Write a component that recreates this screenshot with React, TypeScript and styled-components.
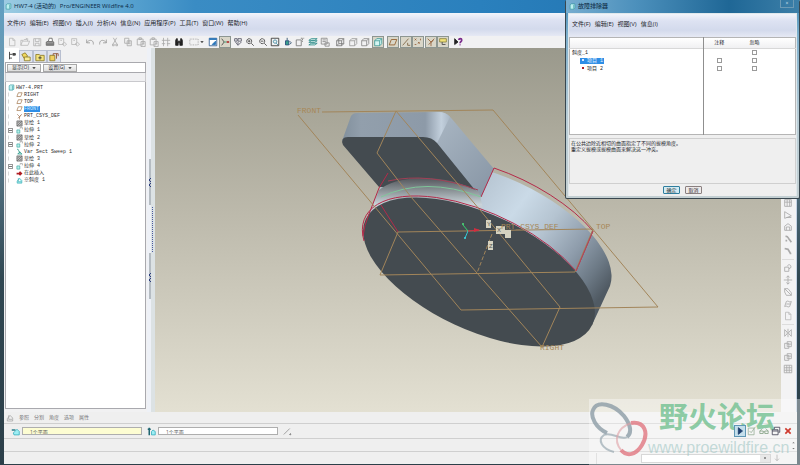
import React from 'react';
import styled, { createGlobalStyle, css } from 'styled-components';

const Global = createGlobalStyle`
  * { box-sizing: border-box; }
  html, body { margin: 0; height: 100%; }
  body {
    font-family: "Open Sans", "Noto Sans CJK SC", sans-serif;
    font-size: 5px;
    line-height: 7px;
    color: #26282e;
    background: #2a3a44;
  }
  button, input, select { font: inherit; color: inherit; margin: 0; padding: 0; border: 0; background: none; }
  button { display: flex; align-items: center; justify-content: center; }
  ul { list-style: none; margin: 0; padding: 0; }
`;

const Desktop = styled.div`
  position: relative;
  min-height: 100vh;
  display: flex;
  flex-direction: column;
  overflow: hidden;
`;

const Frame = styled.div`
  flex: 1;
  display: flex;
  flex-direction: column;
  border: solid #37515f;
  border-width: 0 3px 2px 4px;
  border-image: linear-gradient(#5f9fc4, #6f94a8 20%, #304752 60%, #2c3f49) 1;
  background: #efefef;
`;

const TitleBar = styled.header`
  height: 13px;
  display: flex;
  align-items: center;
  gap: 2px;
  padding-left: 1px;
  color: #0c2a44;
  background: linear-gradient(90deg, #9ccbe2, #64abd4 12%, #3a8cc4 24%, #2a80bd 60%, #1d6ca8);
`;

const TitleText = styled.h1`
  margin: 0;
  font-size: 6px;
  font-weight: 400;
`;

const TitleApp = styled.span`
  margin-left: 4px;
`;

const MenuBar = styled.nav`
  height: 23px;
  display: flex;
  align-items: center;
  gap: 4px;
  padding: 0 3px 2px;
  font-size: 6px;
  white-space: nowrap;
  background: linear-gradient(#f2f5fb, #dde2f2 30%, #d3daec 70%, #e6e9f4);
`;

const MenuItem = styled.button`
  color: #1a1d28;
`;

const ToolBar = styled.div`
  height: 12px;
  display: flex;
  gap: 3px;
  padding-left: 2px;
  background: #f1f1f2;
`;

const ToolGroup = styled.div<{ $w: number }>`
  width: ${(p) => p.$w}px;
  display: flex;
  align-items: center;
  justify-content: space-between;
`;

const ToolButton = styled.button<{ $on?: boolean }>`
  width: 12px;
  height: 12px;
  ${(p) => p.$on && css`
    border: 1px solid #8d9691;
    background: #d9d6c8;
  `}
`;

const PlayButton = styled(ToolButton)`
  border: 1px solid #5f97b5;
  background: #c5dfec;
`;

const Svg = styled.svg<{ $s: number }>`
  display: block;
  flex: none;
  width: ${(p) => p.$s}px;
  height: ${(p) => p.$s}px;
  fill: none;
  stroke: currentColor;
`;

const Work = styled.main`
  flex: 1;
  display: flex;
  min-height: 0;
`;

const Side = styled.aside`
  width: 143px;
  display: flex;
  flex-direction: column;
  padding: 0 1px 3px;
  background: #f1f1f2;
`;

const TabRow = styled.div`
  height: 14px;
  display: flex;
  align-items: flex-end;
`;

const Tab = styled.button<{ $on?: boolean }>`
  width: 14px;
  height: ${(p) => (p.$on ? 14 : 12)}px;
  border: 1px solid ${(p) => (p.$on ? '#ffffff' : '#b8bfd0')};
  border-bottom: 0;
  background: ${(p) => (p.$on ? '#ffffff' : '#dfe3ee')};
`;

const FilterRow = styled.div`
  height: 11px;
  display: flex;
  align-items: center;
  gap: 2px;
  padding-left: 1px;
  background: #fff;
  border: 1px solid #a9a9ae;
`;

const FilterButton = styled.button`
  width: 34px;
  height: 8px;
  gap: 3px;
  border: 1px solid #a8a8a8;
  background: linear-gradient(#f7f7f7, #dcdcdc);
`;

const TreeHead = styled.div`
  height: 9px;
  border: 1px solid #c9c9cd;
  border-top: 0;
  background: #f0f0f2;
`;

const TreeBox = styled.div`
  flex: 1;
  border: 1px solid #a9a9ae;
  border-top: 0;
  background: #fff;
  padding: 2px;
  font-family: "Liberation Mono", "Noto Sans CJK SC", monospace;
`;

const Tree = styled.ul`
  height: 100px;
  display: grid;
  grid-auto-rows: minmax(0, 1fr);
`;

const TreeRow = styled.li`
  display: flex;
  align-items: center;
  gap: 1px;
  white-space: pre;
  line-height: 6px;
`;

const Expander = styled.span<{ $box: boolean }>`
  width: 5px;
  height: 5px;
  border: 1px solid ${(p) => (p.$box ? '#9a9a9a' : 'transparent')};
  border-left-color: ${(p) => (p.$box ? '#9a9a9a' : '#d8d8d8')};
  background: ${(p) => (p.$box ? 'linear-gradient(#777,#777) center / 3px 1px no-repeat' : 'none')};
  margin-right: 2px;
`;

const TreeName = styled.span<{ $sel?: boolean }>`
  padding-right: 1px;
  color: ${(p) => (p.$sel ? '#d4eaff' : '#303030')};
  background: ${(p) => (p.$sel ? '#2e8ee6' : 'none')};
`;

const Splitter = styled.div`
  width: 8px;
  display: flex;
  justify-content: center;
  padding: 110px 0 0;
  background: linear-gradient(90deg, #eef1f7 50%, #dce2e4 50%);
`;

const Stage = styled.section`
  flex: 1;
  min-width: 0;
  min-height: 0;
  overflow: hidden;
  background: linear-gradient(#9a998c, #a8a698 18%, #bcb9ab 45%, #cfccbe 72%, #e3e0d2);
`;

const Drawing = styled.svg`
  display: block;
  width: 100%;
  height: 364px;
`;

const RightBar = styled.div`
  width: 16px;
  display: flex;
  flex-direction: column;
  align-items: center;
  padding: 149px 2px 0 0;
  color: #aaa;
  background: #f3f3f4;
  border-right: 1px solid #c4d3e6;
`;

const RightSep = styled.hr`
  width: 12px;
  margin: 2px 0;
  border: 0;
  border-top: 1px solid #ddd;
`;

const PanelTabs = styled.div`
  height: 12px;
  display: flex;
  align-items: center;
  gap: 5px;
  padding-left: 2px;
  color: #77777a;
  border-bottom: 1px solid #cfcfcf;
`;

const Dashboard = styled.div`
  height: 15px;
  display: flex;
  align-items: center;
  gap: 2px;
  padding: 0 3px 0 7px;
  border-bottom: 1px solid #cfcfcf;
`;

const Collector = styled.input<{ $active?: boolean }>`
  width: 120px;
  height: 8px;
  margin-right: 3px;
  padding-left: 7px;
  border: 1px solid #aeaeae;
  color: #5c5c5c;
  background: ${(p) => (p.$active ? '#fdfdd2' : '#ffffff')};
`;

const DashActions = styled.div`
  position: relative;
  z-index: 1;
  margin-left: auto;
  display: flex;
  align-items: center;
`;

const Message = styled.div`
  height: 13px;
  display: flex;
  flex-direction: column;
  justify-content: center;
  align-items: flex-end;
  gap: 3px;
  padding-right: 2px;
  border-bottom: 1px solid #cfcfcf;
`;

const Status = styled.footer`
  height: 12px;
  display: flex;
  align-items: center;
  justify-content: flex-end;
  gap: 2px;
  padding-right: 16px;
  background: #efefef;
`;

const StatusCell = styled.div`
  width: 43px;
  height: 11px;
  border-left: 1px solid #cfcfcf;
`;

const StatusSelect = styled.select`
  width: 130px;
  height: 9px;
  border: 1px solid #c0c0c0;
  appearance: none;
  background: linear-gradient(#555, #555) right 4px center / 2px 2px no-repeat,
    linear-gradient(#dadada, #dadada) right / 10px 100% no-repeat, #fff;
`;

const Dialog = styled.section`
  position: absolute;
  top: 0;
  right: 0;
  width: 235px;
  display: flex;
  flex-direction: column;
  padding: 0 2px 2px;
  border: 1px solid #39474f;
  border-top: 0;
  border-radius: 2px;
  background: linear-gradient(#3f89b6, #7fb0cd 18%, #b9cdd6 60%, #c3cfd2);
`;

const DialogTitle = styled.header`
  height: 13px;
  display: flex;
  align-items: center;
  gap: 2px;
  margin: 0 -2px;
  padding: 0 5px 0 3px;
  color: #08263c;
  background: linear-gradient(90deg, #76add0, #4c90bc 30%, #1f6796 70%, #3c7fa8);
`;

const CloseButton = styled.button`
  width: 14px;
  height: 8px;
  margin-left: auto;
  align-self: flex-start;
  color: #d7e6ef;
  border: 1px solid #6c9ab5;
  border-top: 0;
`;

const DialogBody = styled.div`
  background: #efefef;
  border: 1px solid #dfe8ec;
  border-bottom: 0;
`;

const Items = styled.table`
  width: 100%;
  height: 98px;
  table-layout: fixed;
  border-collapse: collapse;
  border: 1px solid #b5b5b5;
  background: #fff;
  font-family: "Liberation Mono", "Noto Sans CJK SC", monospace;
`;

const ItemCol = styled.col<{ $w?: number }>`
  width: ${(p) => (p.$w ? `${p.$w}px` : 'auto')};
`;

const HeadRow = styled.tr`
  height: 11px;
  background: linear-gradient(#fff, #f0f0f2);
  border-bottom: 1px solid #d8d8d8;
`;

const ItemRow = styled.tr<{ $fill?: boolean }>`
  height: ${(p) => (p.$fill ? 'auto' : '8px')};
`;

const Cell = styled.td<{ $first?: boolean }>`
  padding: 0;
  font-weight: 400;
  text-align: ${(p) => (p.$first ? 'left' : 'center')};
  border-right: ${(p) => (p.$first ? '1px solid #8f8f8f' : '0')};
  line-height: 6px;
  vertical-align: middle;
`;

const ItemName = styled.span<{ $sel?: boolean; $child?: boolean }>`
  margin-left: ${(p) => (p.$child ? 10 : 1)}px;
  padding: 0 1px;
  color: ${(p) => (p.$sel ? '#e8f4ff' : '#222')};
  background: ${(p) => (p.$sel ? '#2e8ee6' : 'none')};
`;

const Bullet = styled.span<{ $sel?: boolean }>`
  display: inline-block;
  width: 2px;
  height: 2px;
  margin: 0 3px 1px 1px;
  background: ${(p) => (p.$sel ? '#d9e9ff' : '#b02028')};
`;

const Check = styled.input`
  appearance: none;
  display: block;
  width: 5px;
  height: 5px;
  margin: 0 auto;
  border: 1px solid #9a9a9a;
  background: #fff;
`;

const Explain = styled.p`
  height: 46px;
  margin: 3px 0 2px;
  padding: 1px;
  line-height: 6px;
  border: 1px solid #cfcfcf;
`;

const DialogButtons = styled.div`
  display: flex;
  justify-content: center;
  gap: 5px;
  padding-bottom: 2px;
`;

const DialogButton = styled.button<{ $main?: boolean }>`
  width: 17px;
  height: 8px;
  border: 1px solid ${(p) => (p.$main ? '#2f7e9e' : '#8a8080')};
  border-radius: 1px;
  background: ${(p) => (p.$main ? '#d3ebf3' : '#eeeaea')};
`;

const Watermark = styled.div`
  position: absolute;
  right: 0;
  bottom: 0;
  width: 211px;
  height: 67px;
  display: flex;
  pointer-events: none;
  background: rgba(255, 255, 255, 0.38);
`;

const WaterText = styled.div`
  flex: 1;
  display: flex;
  flex-direction: column;
  font-family: "Liberation Sans", "Noto Sans CJK SC", sans-serif;
  white-space: nowrap;
`;

const WaterName = styled.span`
  margin-left: 11px;
  font-size: 29px;
  line-height: 39px;
  font-weight: 700;
  color: rgba(112, 192, 143, 0.8);
`;

const WaterUrl = styled.span`
  font-size: 16px;
  line-height: 20px;
  color: rgba(160, 198, 196, 0.6);
`;

const WaterLogo = styled.svg`
  width: 59px;
  height: 67px;
  fill: none;
`;

type IconName =
  | 'new' | 'open' | 'save' | 'print' | 'mail' | 'undo' | 'redo' | 'cut' | 'copy' | 'paste' | 'regen'
  | 'find' | 'select' | 'sketch' | 'spin' | 'orient' | 'zoomIn' | 'zoomOut' | 'fit' | 'refit' | 'view'
  | 'layers' | 'list' | 'wire' | 'hidden' | 'nohide' | 'shaded' | 'plane' | 'axis' | 'point' | 'csys'
  | 'note' | 'help' | 'tree' | 'folder' | 'fav' | 'connect' | 'part' | 'hatch' | 'extrude' | 'sweep'
  | 'insert' | 'draft' | 'hole' | 'shell' | 'rib' | 'round' | 'chamfer' | 'revolve' | 'move' | 'blend'
  | 'style' | 'mirror' | 'merge' | 'pattern' | 'play' | 'check' | 'glasses' | 'window' | 'close'
  | 'hinge' | 'pull' | 'flip' | 'arrow' | 'caret' | 'caretUp' | 'slope';

const cube = <path d="M2 4.5h6v6H2zM2 4.5L4.500 2H10.500V8L8 10.500M8 4.500L10.500 2" />;

const shapes: Record<IconName, React.ReactNode> = {
  new: <path stroke="#bbb" d="M3 1.500h4L9.500 4v6.500h-6.500zM7 1.500V4h2.500" />,
  open: <path stroke="#bbb" d="M1 10V4h3l1-1h4v2M1 10l2-5h8.500L9.500 10zM7 1.500l3 1" />,
  save: <path stroke="#b4b4b4" d="M2 2h8.500v8.500H2zM4 2v3.500h4.500V2M4 10.500V7.500h4.500v3" />,
  print: <g stroke="#666"><path fill="#999" d="M1.500 6L4 5h5l1.500 1v4h-9z" /><path fill="#fff" d="M4 5.500l1-4h3.500l.5 4zM2 8.500h8" /></g>,
  mail: <path stroke="#b8b8b8" d="M2 2h6v7H2zM4 4h2M6 8.500l3-2 2.500 2-2.500 2.500z" />,
  undo: <path stroke="#999" d="M2 3v4h4M2 7c2-4 8-4 8 .5V9" />,
  redo: <path stroke="#999" d="M10 3v4H6M10 7C8 3 2 3 2 7.500V9" />,
  cut: <path stroke="#aaa" d="M4 1l4 7M8 1L4 8M3 8.500h2v2H3zM7 8.500h2v2H7z" />,
  copy: <path stroke="#aaa" d="M2 1.500h5v6H2zM5 4.500h5v6H5zM6 6h3M6 8h3" />,
  paste: <path stroke="#aaa" d="M1.500 2.500h7v7h-7zM3.500 1h3v2h-3zM6 5.500h5v6H6zM7 7.500h3" />,
  regen: <path stroke="#aaa" d="M3 1v10M8 1v10M1 4h10M1 8h4M7 8h4" />,
  find: <path fill="#222" stroke="#222" d="M2 4l1-2h1v3h4V2h1l1 2v6H7V7H5v3H2z" />,
  select: <path stroke="#999" strokeDasharray="1 1" d="M1 2.500h10v7H1z" />,
  sketch: <g><path fill="#fff" stroke="#2c5a92" d="M1.500 1.500h9v9h-9z" /><path fill="#2674b8" stroke="#2674b8" d="M2 2h8v1H2zM5 9l4-4v4z" /></g>,
  spin: <g><path stroke="#444" d="M2 2l3 4-3 4" /><path stroke="#2a9c6a" d="M5 6h3" /><path stroke="#b03030" strokeWidth="2" d="M8 6h3" /></g>,
  orient: <path stroke="#556" d="M2 2h3v3H2zM6 2h4v3H6zM3 6l3 4 4-4M6 6v3" />,
  zoomIn: <path stroke="#444" d="M5 2a3 3 0 1 0 .1 0M3.500 5h3M5 3.500v3M7.500 7.500l3 3" />,
  zoomOut: <path stroke="#444" d="M5 2a3 3 0 1 0 .1 0M3.500 5h3M7.500 7.500l3 3" />,
  fit: <g><path stroke="#333" d="M1.500 1.500h9v9h-9z" /><path stroke="#2b8098" d="M6 3.500a2 2 0 1 0 .1 0M7.500 7.500l2 2" /></g>,
  refit: <g><path fill="#39a08c" stroke="#247" d="M3 4.500h4v5H3z" /><path stroke="#246" d="M5 1v3M8 5l2 2-2 2" /></g>,
  view: <g stroke="#777"><path d="M1.500 3.500h6v7h-6z" /><path strokeDasharray="2 1" d="M7 1.500h4M9 2v4" /></g>,
  layers: <g stroke="#2d8a88"><path fill="#dff3ef" d="M1 9.500l3-2h7l-3 2zM1 6.500l3-2h7l-3 2zM1 4l3-2h7L8 4z" /></g>,
  list: <path stroke="#888" d="M1.500 1.500h7v7h-7zM3 3.500h4M3 5.500h4M6 7h5v4H6z" />,
  wire: <g stroke="#777">{cube}<path d="M4.500 2v6M2 10.500L4.500 8H10.500" /></g>,
  hidden: <g stroke="#999">{cube}</g>,
  nohide: <g stroke="#888">{cube}</g>,
  shaded: <g stroke="#3f9a97" fill="#d5f5f2">{cube}</g>,
  plane: <path stroke="#8f5a28" d="M1.500 9.500L4 3h6.500L8 9.500z" />,
  axis: <path stroke="#7b6240" d="M2 10L9 2M8 7v3h3" />,
  point: <path stroke="#94603a" d="M2 2l2 2M4 2L2 4M6 6l2 2M8 6L6 8M9 2v2M2 9h2" />,
  csys: <path stroke="#94603a" d="M2 2l4 4 4-4M6 6v5M3 9l6-5" />,
  note: <g><path fill="#f2e27a" stroke="#8c8440" d="M2 2h8v4H2z" /><path stroke="#444" d="M5 6v3h4" /></g>,
  help: <g><path fill="#222" stroke="#222" d="M2 2v7l4-3z" /><path stroke="#7a2c8c" strokeWidth="2" d="M7 3.500c0-2 3.500-2 3.500 0 0 2-2 2-2 4M8.500 9v1" /></g>,
  tree: <g><path stroke="#333" d="M3 1v9M3 4h3M3 8.500h3" /><path fill="#555" stroke="#333" d="M7 3h3v2H7z" /></g>,
  folder: <g><path fill="#f0d860" stroke="#8d7b28" d="M1 3l4-2 3 4-4 3z" /><path fill="#f7eb9b" stroke="#8d7b28" d="M4 6h7v4.500H4z" /></g>,
  fav: <g><path fill="#f3e27b" stroke="#8d7b28" d="M1 3h4l1 1h5v6.500H1z" /><path stroke="#333" d="M4 7h4M6 5v4" /></g>,
  connect: <g><path fill="#f0d060" stroke="#8d7b28" d="M1 4h6v6.500H1z" /><path stroke="#8a4a2a" d="M5 4V2h6v3M9 2v6" /></g>,
  part: <path fill="#bdf0f0" stroke="#2a9098" d="M2 3l2-1.500h6v7.500L8 10.500H2zM8 3v7" />,
  hatch: <g stroke="#555"><path fill="#bbb" d="M1.500 1.500h9v9h-9z" /><path d="M2 6l4-4M2 10l8-8M6 10l4-4" /></g>,
  extrude: <g><path stroke="#888" d="M7 3V1h4v3" /><path fill="#b6f0e9" stroke="#2a9c9a" d="M1.500 5h5v5.500h-5z" /></g>,
  sweep: <path stroke="#2a9c8a" strokeWidth="1.500" d="M2 2c4 0 1 5 5 5M3 10l4-3 3 3.500z" />,
  insert: <path stroke="#b01c22" strokeWidth="3" d="M1 6h9M6 3l3 3-3 3" />,
  draft: <path fill="#9eecec" stroke="#2ba4ae" d="M2 10.500V7l4-5 4 4v4.500zM4 2v6h5" />,
  hole: <path d="M2 2h8v8H2zM2 5h8M5 2v8M8 2v8" />,
  shell: <path d="M2 10V2l8 5zM4 9h6" />,
  rib: <path d="M2 5l4-3 4 3v5H2zM4 10V6h4v4" />,
  round: <path strokeWidth="2" d="M3 3c3-1 3 2 5 4l2 3M3 8h2" />,
  chamfer: <path strokeWidth="2" d="M2 3l4 1 3 5M8 9h2" />,
  revolve: <path d="M2 5h5v5H2zM5 4c2-4 6-1 4 2l-2 1" />,
  move: <path d="M6 1v10M1 6h10M4 3l2-2 2 2M4 9l2 2 2-2" />,
  blend: <path d="M2 2h4l4 5v3H4L2 6zM2 2l8 8" />,
  style: <path d="M2 9l2-6c3-2 3 2 6 0L8 9c-3 2-3-2-6 0zM4 6h5" />,
  mirror: <path d="M6 1v10M2 2l3 3v2L2 10zM10 2L7 5v2l3 3z" />,
  merge: <path d="M2 4h5v6H2zM5 2h5v6H5zM5 5h5" />,
  pattern: <path d="M1.500 1.500h9v9h-9zM1.500 4.500h9M1.500 7.500h9M4.500 1.500v9M7.500 1.500v9" />,
  play: <path fill="#1d3e6e" stroke="#1d3e6e" d="M4 2v8l5-4z" />,
  check: <path stroke="#9bb29b" d="M1.500 2.500h7v8h-7zM3 6l2 2 5-7" />,
  glasses: <path stroke="#88a488" d="M1 6h4v3H1zM7 6h4v3H7zM5 7h2M1 6l3-3M11 6L8 3" />,
  window: <path stroke="#445" d="M1.500 4.500h7v6h-7zM4 4V1.500h6.500v6H9M1.500 6h7" />,
  close: <path stroke="#cf3b2f" strokeWidth="2.500" d="M2 2l8 8M10 2l-8 8" />,
  hinge: <g><path stroke="#2b7f8b" strokeWidth="2" d="M1 4h5" /><path fill="#9deef4" stroke="#30aab8" d="M5 6l3-3 3 3v4.500H4L3 8z" /></g>,
  pull: <g><path stroke="#1f6570" strokeWidth="2" d="M3 1v10M1 3h4" /><path fill="#9deef4" stroke="#30aab8" d="M6 6l2-2 3 2v4.500H6z" /></g>,
  flip: <path stroke="#888" d="M1 10L9 2M8 10h3M10 8v3" />,
  arrow: <path stroke="#777" d="M6 1v9M3 7l3 3 3-3" />,
  caret: <path fill="#222" stroke="none" d="M1 4h10L6 9z" />,
  caretUp: <path fill="#222" stroke="none" d="M1 9h10L6 4z" />,
  slope: <path stroke="#9a9a9a" d="M2 10.500V7l4-5 4 4v4.500zM4 2v6h5" />,
};

const Icon = ({ name, size = 10 }: { name: IconName; size?: number }) => (
  <Svg $s={size} viewBox="0 0 12 12" aria-hidden="true">{shapes[name]}</Svg>
);

type Group = { w: number; icons: IconName[]; on?: IconName[] };

const groups: Group[] = [
  { w: 75, icons: ['new', 'open', 'save', 'print', 'mail', 'mail'] },
  { w: 101, icons: ['undo', 'redo', 'cut', 'copy', 'paste', 'paste', 'regen', 'find'] },
  { w: 16, icons: ['select'] },
  { w: 124, icons: ['sketch', 'spin', 'orient', 'zoomIn', 'zoomOut', 'fit', 'refit', 'view', 'layers', 'list'], on: ['spin'] },
  { w: 50, icons: ['wire', 'hidden', 'nohide', 'shaded'], on: ['shaded'] },
  { w: 62, icons: ['plane', 'axis', 'point', 'csys', 'note'], on: ['plane', 'axis', 'point', 'csys', 'note'] },
  { w: 12, icons: ['help'] },
];

const menus = ['文件(F)', '编辑(E)', '视图(V)', '插入(I)', '分析(A)', '信息(N)', '应用程序(P)', '工具(T)', '窗口(W)', '帮助(H)'];
const dialogMenus = ['文件(F)', '编辑(E)', '视图(V)', '信息(I)'];
const panelTabs = ['参照', '分割', '角度', '选项', '属性'];

const treeItems: { icon: IconName; name: string; open?: boolean; sel?: boolean }[] = [
  { icon: 'plane', name: 'RIGHT' },
  { icon: 'plane', name: 'TOP' },
  { icon: 'plane', name: 'FRONT', sel: true },
  { icon: 'csys', name: 'PRT_CSYS_DEF' },
  { icon: 'hatch', name: '草绘 1' },
  { icon: 'extrude', name: '拉伸 1', open: true },
  { icon: 'hatch', name: '草绘 2' },
  { icon: 'extrude', name: '拉伸 2', open: true },
  { icon: 'sweep', name: 'Var Sect Sweep 1' },
  { icon: 'hatch', name: '草绘 3' },
  { icon: 'extrude', name: '拉伸 4', open: true },
  { icon: 'insert', name: '在此插入' },
  { icon: 'draft', name: '※斜度 1' },
];

const rightIcons: (IconName | null)[] = [
  'hole', 'shell', 'rib', 'round', 'chamfer', null, 'revolve', 'move', 'blend', 'style', 'new', null,
  'mirror', 'merge', 'merge', 'pattern',
];

const Model = () => (
  <Drawing viewBox="155 48 626 364" preserveAspectRatio="xMinYMin slice" role="img" aria-label="HW7-4">
    <defs>
      <linearGradient id="wall" gradientUnits="userSpaceOnUse" x1="470" y1="185" x2="606" y2="290">
        <stop offset="0" stopColor="#b4c2cf" />
        <stop offset=".3" stopColor="#cadae7" />
        <stop offset=".5" stopColor="#b5c4d1" />
        <stop offset=".72" stopColor="#8e9cab" />
        <stop offset=".88" stopColor="#6c7985" />
        <stop offset="1" stopColor="#505a63" />
      </linearGradient>
      <linearGradient id="rim" gradientUnits="userSpaceOnUse" x1="345" y1="0" x2="452" y2="0">
        <stop offset="0" stopColor="#84929f" />
        <stop offset=".15" stopColor="#929fac" />
        <stop offset=".75" stopColor="#8d9aa8" />
        <stop offset=".9" stopColor="#c3d0dd" />
        <stop offset="1" stopColor="#a3b1bf" />
      </linearGradient>
      <linearGradient id="flank" gradientUnits="userSpaceOnUse" x1="440" y1="130" x2="492" y2="180">
        <stop offset="0" stopColor="#a5b2bf" />
        <stop offset="1" stopColor="#8b99a8" />
      </linearGradient>
      <linearGradient id="fillet" x1="0" y1="0" x2="0" y2="1">
        <stop offset="0" stopColor="#53565c" />
        <stop offset=".3" stopColor="#8d9599" />
        <stop offset=".6" stopColor="#c9d3d9" />
        <stop offset="1" stopColor="#a9b5c0" />
      </linearGradient>
    </defs>

    <path fill="url(#wall)" d="M384 180A125 58 25 0 1 610 286L592 325L366 219z" />
    <path fill="url(#flank)" d="M437 112Q447 112 452 119L494 169L481 197L425 138z" />
    <path fill="url(#rim)" d="M342 141L351 116Q353 113 357 113L439 112Q446 112 450 117L437 143L423 137z" />
    <path fill="#444b50" d="M348 137H423Q432 137 437 143L479 195L455 190L379 187L343 145Q340 137 348 137z" />
    <path fill="url(#fillet)" d="M379 190Q392 179 420 178Q452 177 479 192L483 208L420 200L366 222z" />
    <ellipse fill="#444b50" rx="125" ry="58" transform="translate(479 272) rotate(25)" />

    <g fill="none" stroke="#b42a49" strokeWidth="1">
      <path d="M364 241A125 58 25 0 1 576 271L593 231A125 58 25 0 0 494 168L481 197" />
      <path d="M363 236Q364 226 369 214L379 188L388 173M381 205L398 232" />
      <path stroke="#a23f55" d="M388 181Q428 172 478 190" />
      <path stroke="#7fc79a" d="M381 197Q425 176 481 197" />
    </g>
    <g fill="none" stroke="#a2855a" strokeWidth="1">
      <path d="M322 112L493 110L658 307L461 310L298 115" />
      <path d="M396 111L377 153L411 197L477 273L542 347L560 307L480 210z" />
      <path d="M398 232L593 229L575 272L380 275z" />
      <path strokeDasharray="4 2" d="M492 234L477 273" />
    </g>
    <path fill="none" stroke="#b0485a" d="M576 271L593 231" />
    <g fill="none" strokeWidth="1">
      <path stroke="#35d46e" d="M468 231L463 225" />
      <path stroke="#35c7d4" d="M468 231L465 238" />
      <path stroke="#d02e40" d="M468 231L479 230" />
    </g>
    <circle cx="463" cy="224" r="1" fill="#4be07a" />
    <circle cx="465" cy="238" r="1" fill="#3bdbe8" />
    <path fill="#d02e40" d="M474 228l6 2-6 2z" />
    <g fill="#d5d2c0">
      <path d="M486 220h5v8h-5zM496 226h9v8h-9zM505 230h6v8h-6zM488 241h5v9h-5z" />
    </g>
    <g fontFamily="Liberation Mono, monospace" fontSize="8" fill="#a78756">
      <text x="297" y="113">FRONT</text>
      <text x="501" y="229">PRT_CSYS_DEF</text>
      <text x="596" y="229">TOP</text>
      <text x="540" y="350">RIGHT</text>
    </g>
    <g fontFamily="Liberation Sans, sans-serif" fontSize="6" fill="#55554c">
      <text x="487" y="226">Y</text>
      <text x="497" y="232">X</text>
      <text x="489" y="248">Z</text>
    </g>
  </Drawing>
);

const ItemLine = ({ name, child, sel, note }: { name: string; child?: boolean; sel?: boolean; note?: boolean }) => (
  <ItemRow>
    <Cell $first>
      <ItemName $sel={sel} $child={child}>{child && <Bullet $sel={sel} />}{name}</ItemName>
    </Cell>
    <Cell>{note && <Check type="checkbox" aria-label={`注释 ${name}`} />}</Cell>
    <Cell><Check type="checkbox" aria-label={`忽略 ${name}`} /></Cell>
    <Cell />
  </ItemRow>
);

const Troubleshooter = () => (
  <Dialog role="dialog" aria-label="故障排除器">
    <DialogTitle>
      <Icon name="part" size={7} />
      <TitleText as="h2">故障排除器</TitleText>
      <CloseButton aria-label="关闭">×</CloseButton>
    </DialogTitle>
    <DialogBody>
      <MenuBar>
        {dialogMenus.map((m) => <MenuItem key={m}>{m}</MenuItem>)}
      </MenuBar>
      <Items>
        <colgroup><ItemCol $w={134} /><ItemCol $w={31} /><ItemCol $w={40} /><ItemCol /></colgroup>
        <tbody>
          <HeadRow>
            <Cell as="th" $first />
            <Cell as="th">注释</Cell>
            <Cell as="th">忽略</Cell>
            <Cell />
          </HeadRow>
          <ItemLine name="斜度_1" />
          <ItemLine name="项目 1" child sel note />
          <ItemLine name="项目 2" child note />
          <ItemRow $fill><Cell $first /><Cell /><Cell /><Cell /></ItemRow>
        </tbody>
      </Items>
      <Explain>
        在公共边除近相切的曲面指定了不同的拔模角度。<br />
        重定义拔模或拔模曲面来解决这一冲突。
      </Explain>
      <DialogButtons>
        <DialogButton $main>确定</DialogButton>
        <DialogButton>取消</DialogButton>
      </DialogButtons>
    </DialogBody>
  </Dialog>
);

const SplitMarks = () => (
  <svg width="8" height="144" viewBox="0 0 8 144" aria-hidden="true">
    <path fill="#b5bcc2" d="M2 1h2v46H2zM2 95h2v46H2z" />
    <path fill="none" stroke="#2b3c7c" d="M4 20l-2 2 2 2M4 25l-2 2 2 2M4 115l-2 2 2 2M4 120l-2 2 2 2" />
    <path fill="none" stroke="#4a5ba0" strokeDasharray="1 1" d="M5.500 49v46" />
  </svg>
);

export default function App() {
  return (
    <Desktop>
      <Global />
      <Frame>
        <TitleBar>
          <Icon name="part" size={7} />
          <TitleText>HW7-4 (活动的)<TitleApp>Pro/ENGINEER Wildfire 4.0</TitleApp></TitleText>
        </TitleBar>
        <MenuBar>
          {menus.map((m) => <MenuItem key={m}>{m}</MenuItem>)}
        </MenuBar>
        <ToolBar>
          {groups.map((g, i) => (
            <ToolGroup key={i} $w={g.w}>
              {g.icons.map((n, j) => (
                <ToolButton key={j} $on={g.on?.includes(n)} aria-label={n}><Icon name={n} /></ToolButton>
              ))}
              {i === 2 && <Icon name="caret" size={4} />}
            </ToolGroup>
          ))}
        </ToolBar>
        <Work>
          <Side>
            <TabRow>
              <Tab $on aria-label="模型树"><Icon name="tree" /></Tab>
              <Tab aria-label="文件夹"><Icon name="folder" /></Tab>
              <Tab aria-label="收藏夹"><Icon name="fav" /></Tab>
              <Tab aria-label="连接"><Icon name="connect" /></Tab>
            </TabRow>
            <FilterRow>
              <FilterButton>显示(O)<Icon name="caret" size={4} /></FilterButton>
              <FilterButton>设置(G)<Icon name="caret" size={4} /></FilterButton>
            </FilterRow>
            <TreeHead />
            <TreeBox>
              <Tree>
                <TreeRow><Icon name="part" size={7} /><TreeName>HW7-4.PRT</TreeName></TreeRow>
                {treeItems.map((t) => (
                  <TreeRow key={t.name}>
                    <Expander $box={!!t.open} />
                    <Icon name={t.icon} size={7} />
                    <TreeName $sel={t.sel}>{t.name}</TreeName>
                  </TreeRow>
                ))}
              </Tree>
            </TreeBox>
          </Side>
          <Splitter><SplitMarks /></Splitter>
          <Stage><Model /></Stage>
          <RightBar>
            {rightIcons.map((n, i) => (n
              ? <ToolButton key={i} aria-label={n}><Icon name={n} /></ToolButton>
              : <RightSep key={i} />))}
          </RightBar>
        </Work>
        <PanelTabs>
          <Icon name="slope" size={8} />
          {panelTabs.map((t) => <button key={t}>{t}</button>)}
        </PanelTabs>
        <Dashboard>
          <Icon name="hinge" size={9} />
          <Collector $active aria-label="拔模枢轴" defaultValue="1个平面" />
          <Icon name="pull" size={9} />
          <Collector aria-label="拖动方向" defaultValue="1个平面" />
          <Icon name="flip" size={9} />
          <DashActions>
            <PlayButton aria-label="继续"><Icon name="play" /></PlayButton>
            <ToolButton aria-label="校验"><Icon name="check" /></ToolButton>
            <ToolButton aria-label="预览"><Icon name="glasses" /></ToolButton>
            <ToolButton aria-label="窗口"><Icon name="window" /></ToolButton>
            <ToolButton aria-label="取消特征"><Icon name="close" size={8} /></ToolButton>
          </DashActions>
        </Dashboard>
        <Message><Icon name="caretUp" size={3} /><Icon name="caret" size={3} /></Message>
        <Status>
          <StatusCell />
          <StatusSelect aria-label="过滤器" />
          <Icon name="arrow" size={8} />
        </Status>
      </Frame>
      <Troubleshooter />
      <Watermark>
        <WaterLogo viewBox="0 0 59 67" aria-hidden="true">
          <path stroke="#8c9ca6" strokeWidth="4" opacity=".8" d="M18 34C7 29 1 18 4 11C8 1 25 5 35 17C42 26 43 34 38 38" />
          <path stroke="#9aa9b2" strokeWidth="2" opacity=".7" d="M38 38C32 42 22 32 15 36C8 41 13 50 25 53" />
          <path stroke="#df6e78" strokeWidth="4" opacity=".75" d="M42 24C56 22 60 34 53 46C47 56 38 58 32 51" />
          <path stroke="#e0a0a5" strokeWidth="2" opacity=".6" d="M32 51C24 41 28 29 42 24" />
        </WaterLogo>
        <WaterText>
          <WaterName>野火论坛</WaterName>
          <WaterUrl>www.proewildfire.cn</WaterUrl>
        </WaterText>
      </Watermark>
    </Desktop>
  );
}
